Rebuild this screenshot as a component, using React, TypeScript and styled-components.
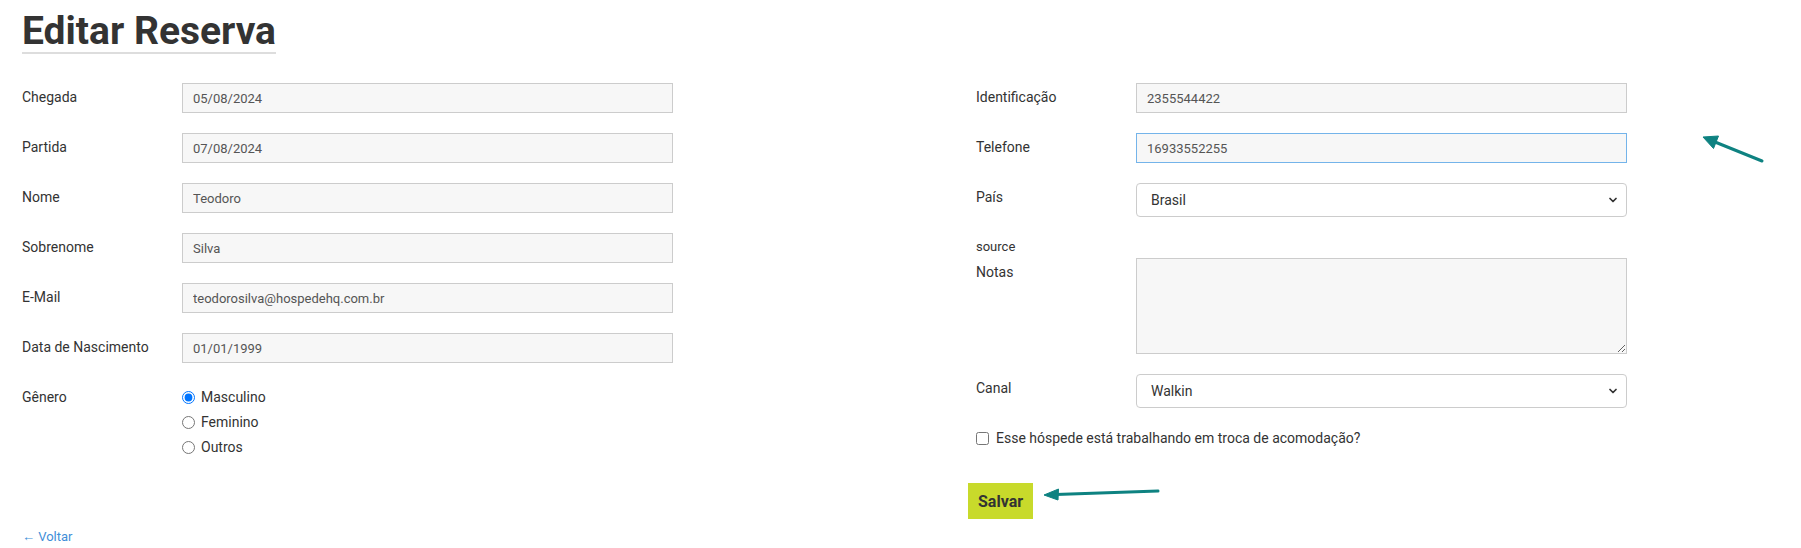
import styled, { createGlobalStyle } from "styled-components";
import { ChevronDown } from "lucide-react";

const GlobalStyle = createGlobalStyle`
  html, body {
    margin: 0;
    padding: 0;
    background: #fff;
  }
  body {
    font-family: Roboto, "Liberation Sans", Arial, sans-serif;
    font-size: 14px;
    color: #333;
  }
`;

const Page = styled.div`
  position: relative;
  height: 548px;
  padding: 0 22px;
  overflow: hidden;
`;

const Header = styled.div`
  display: flex;
`;

const Title = styled.h1`
  margin: 10px 0 0;
  font-size: 39px;
  line-height: 42px;
  font-weight: 700;
  color: #333;
  border-bottom: 2px solid #ddd;
`;

const Columns = styled.div`
  display: grid;
  grid-template-columns: 954px 1fr;
  margin-top: 29px;
`;

const Column = styled.div`
  display: flex;
  flex-direction: column;
`;

const Row = styled.div<{ $gap?: number }>`
  display: grid;
  grid-template-columns: 160px 491px;
  margin-bottom: ${(p) => (p.$gap ?? 20)}px;
`;

const Label = styled.label`
  font-size: 14px;
  line-height: 20px;
  padding-top: 4px;
  color: #333;
`;

const TextInput = styled.input<{ $focused?: boolean }>`
  box-sizing: border-box;
  width: 100%;
  height: 30px;
  margin: 0;
  padding: 0 10px;
  border: 1px solid ${(p) => (p.$focused ? "#74b4ea" : "#ccc")};
  border-radius: 0;
  background: #f7f7f7;
  font-family: Roboto, "Liberation Sans", sans-serif;
  font-size: 13px;
  color: #555;
  outline: none;
`;

const SelectWrap = styled.div`
  position: relative;
  box-sizing: border-box;
  display: flex;
  align-items: center;
  height: 34px;
  padding: 0 26px 0 14px;
  border: 1px solid #ccc;
  border-radius: 4px;
  background: #fff;

  svg {
    position: absolute;
    right: 7px;
    top: 10px;
    color: #333;
    pointer-events: none;
  }
`;

const Select = styled.select`
  appearance: none;
  flex: 1;
  height: 100%;
  margin: 0;
  padding: 0;
  border: none;
  background: transparent;
  font-family: Roboto, "Liberation Sans", sans-serif;
  font-size: 14px;
  color: #333;
  outline: none;
`;

const TextArea = styled.textarea`
  box-sizing: border-box;
  width: 100%;
  height: 96px;
  margin: 0;
  padding: 6px 10px;
  border: 1px solid #ccc;
  background: #f7f7f7;
  font-family: Roboto, "Liberation Sans", sans-serif;
  font-size: 13px;
  color: #555;
  outline: none;
`;

const Source = styled.div`
  font-size: 13px;
  line-height: 20px;
  color: #333;
  margin-bottom: 1px;
`;

const RadioGroup = styled.div`
  display: flex;
  flex-direction: column;
  gap: 5px;
  padding-top: 4px;
`;

const Option = styled.label`
  display: flex;
  align-items: center;
  height: 20px;
  font-size: 14px;
  color: #333;

  input {
    width: 13px;
    height: 13px;
    margin: 0 6px 0 0;
  }
`;

const CheckLine = styled.label`
  display: flex;
  align-items: center;
  height: 20px;
  font-size: 14px;
  color: #333;

  input {
    width: 13px;
    height: 13px;
    margin: 0 7px 0 0;
  }
`;

const SaveButton = styled.button`
  align-self: flex-start;
  margin: 35px 0 0 -8px;
  height: 36px;
  padding: 0 10px;
  border: none;
  border-radius: 0;
  background: #c8da2b;
  font-family: Roboto, "Liberation Sans", sans-serif;
  font-size: 16px;
  font-weight: 700;
  color: #333;
`;

const BackLink = styled.a`
  display: block;
  margin-top: 8px;
  font-size: 13px;
  line-height: 20px;
  color: #3f8fd8;
  text-decoration: none;
`;

const Annotations = styled.svg`
  position: absolute;
  top: 0;
  left: 0;
  pointer-events: none;
`;

const leftFields = [
  { label: "Chegada", value: "05/08/2024" },
  { label: "Partida", value: "07/08/2024" },
  { label: "Nome", value: "Teodoro" },
  { label: "Sobrenome", value: "Silva" },
  { label: "E-Mail", value: "teodorosilva@hospedehq.com.br" },
  { label: "Data de Nascimento", value: "01/01/1999" },
];

function Dropdown({ value }: { value: string }) {
  return (
    <SelectWrap>
      <Select defaultValue={value}>
        <option>{value}</option>
      </Select>
      <ChevronDown size={12} strokeWidth={3.5} />
    </SelectWrap>
  );
}

export default function App() {
  return (
    <>
      <GlobalStyle />
      <Page>
        <Header>
          <Title>Editar Reserva</Title>
        </Header>
        <Columns>
          <Column>
            {leftFields.map((f) => (
              <Row key={f.label}>
                <Label>{f.label}</Label>
                <TextInput defaultValue={f.value} readOnly />
              </Row>
            ))}
            <Row>
              <Label>Gênero</Label>
              <RadioGroup>
                <Option>
                  <input type="radio" name="genero" defaultChecked />
                  Masculino
                </Option>
                <Option>
                  <input type="radio" name="genero" />
                  Feminino
                </Option>
                <Option>
                  <input type="radio" name="genero" />
                  Outros
                </Option>
              </RadioGroup>
            </Row>
          </Column>
          <Column>
            <Row>
              <Label>Identificação</Label>
              <TextInput defaultValue="2355544422" readOnly />
            </Row>
            <Row>
              <Label>Telefone</Label>
              <TextInput defaultValue="16933552255" $focused />
            </Row>
            <Row>
              <Label>País</Label>
              <Dropdown value="Brasil" />
            </Row>
            <Source>source</Source>
            <Row>
              <Label>Notas</Label>
              <TextArea />
            </Row>
            <Row>
              <Label>Canal</Label>
              <Dropdown value="Walkin" />
            </Row>
            <CheckLine>
              <input type="checkbox" />
              Esse hóspede está trabalhando em troca de acomodação?
            </CheckLine>
            <SaveButton>Salvar</SaveButton>
          </Column>
        </Columns>
        <BackLink href="#">← Voltar</BackLink>
        <Annotations width="1801" height="548" viewBox="0 0 1801 548">
          <g fill="#0e8281" stroke="#0e8281">
            <line x1="1762" y1="161" x2="1715" y2="142" strokeWidth="3" strokeLinecap="round" />
            <polygon points="1703,137 1718.5,136 1713.5,148.5" strokeWidth="1" strokeLinejoin="round" />
            <line x1="1158" y1="491" x2="1056" y2="494.5" strokeWidth="3" strokeLinecap="round" />
            <polygon points="1044,495 1058.5,489 1058,500" strokeWidth="1" strokeLinejoin="round" />
          </g>
        </Annotations>
      </Page>
    </>
  );
}
